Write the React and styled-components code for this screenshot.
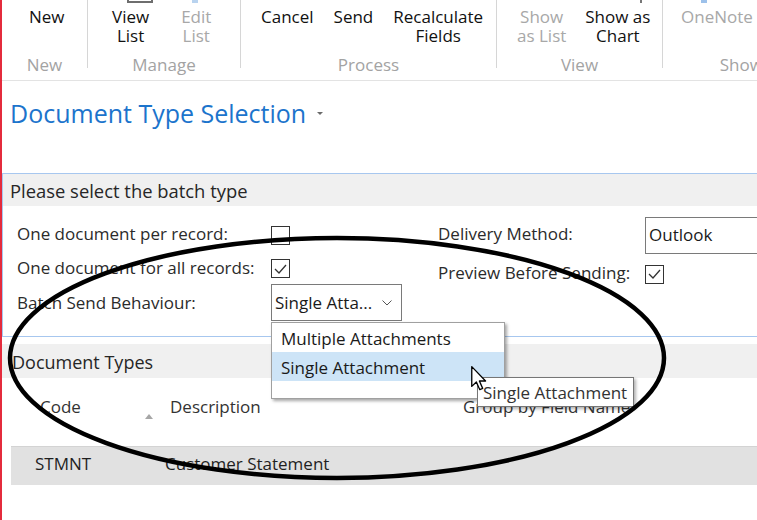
import React from "react";
import styled, { createGlobalStyle } from "styled-components";

const GlobalStyle = createGlobalStyle`
  html, body {
    margin: 0;
    padding: 0;
    background: #fff;
  }
  body {
    font-family: "Open Sans", "Noto Sans", sans-serif;
    color: #2b2b2b;
    width: 757px;
    height: 520px;
    overflow: hidden;
  }
`;

const Page = styled.div`
  position: relative;
  width: 757px;
  height: 520px;
  border-left: 2px solid #e42b3c;
  box-sizing: border-box;
  overflow: hidden;
`;

/* ---------- ribbon ---------- */

const Ribbon = styled.div`
  display: flex;
  align-items: flex-start;
  height: 80px;
  border-bottom: 1px solid #e3e3e3;
  white-space: nowrap;
`;

const Group = styled.div`
  flex: none;
  width: ${(p) => p.$w}px;
  height: 68px;
  box-sizing: border-box;
  border-right: ${(p) => (p.$last ? "none" : "1px solid #d6d6d6")};
  display: flex;
  flex-direction: column;
`;

const Buttons = styled.div`
  flex: none;
  display: flex;
  align-items: flex-start;
  height: 55px;
  padding-left: ${(p) => p.$pad}px;
  gap: ${(p) => p.$gap || 0}px;
`;

const RibbonButton = styled.div`
  display: flex;
  flex-direction: column;
  align-items: center;
  font-size: 17px;
  line-height: 19px;
  text-align: center;
  white-space: pre-line;
  color: ${(p) => (p.$disabled ? "#a8a8a8" : "#111")};
`;

const IconStub = styled.div`
  width: ${(p) => p.$w || 0}px;
  height: 3px;
  margin-bottom: 4px;
  box-sizing: border-box;
  transform: translateX(${(p) => p.$dx || 0}px);
  background: ${(p) => (p.$box ? "transparent" : p.$color || "transparent")};
  border: ${(p) => (p.$box ? "2px solid #6e6e6e" : "none")};
  border-top: none;
`;

const GroupLabel = styled.div`
  flex: none;
  height: 20px;
  line-height: 20px;
  font-size: 17px;
  text-align: center;
  color: #a3a3a3;
`;

/* ---------- title ---------- */

const TitleBar = styled.div`
  display: flex;
  align-items: center;
  gap: 11px;
  padding: 15px 0 43px 8px;
  height: 34px;
`;

const Title = styled.h1`
  margin: 0;
  font-size: 25px;
  font-weight: 400;
  line-height: 34px;
  color: #1c74cc;
`;

const Caret = styled.span`
  width: 0;
  height: 0;
  border-left: 3px solid transparent;
  border-right: 3px solid transparent;
  border-top: 3px solid #6a6a6a;
`;

/* ---------- fast tab ---------- */

const Panel = styled.section`
  border: 1px solid #a7c7ef;
  border-right: none;
`;

const PanelHeader = styled.div`
  height: 32px;
  line-height: 33px;
  padding-left: 7px;
  background: #f0f0f0;
  font-size: 18.4px;
  color: #262626;
`;

const PanelBody = styled.div`
  display: flex;
  padding: 10px 0 15px 14px;
`;

const Column = styled.div`
  flex: none;
  width: ${(p) => p.$w}px;
  display: flex;
  flex-direction: column;
`;

const FieldRow = styled.div`
  display: flex;
  align-items: center;
  height: ${(p) => p.$h}px;
`;

const FieldLabel = styled.div`
  flex: none;
  width: ${(p) => p.$w}px;
  font-size: 17px;
  color: #2b2b2b;
  white-space: nowrap;
  margin-top: ${(p) => p.$dy || 0}px;
`;

const CheckBox = styled.div`
  width: 19px;
  height: 19px;
  box-sizing: border-box;
  margin-top: ${(p) => p.$dy || 0}px;
  border: 1px solid #333;
  display: flex;
  align-items: center;
  justify-content: center;
`;

const TextBox = styled.div`
  width: 140px;
  height: 37px;
  box-sizing: border-box;
  border: 1px solid #7a7a7a;
  padding-left: 3px;
  line-height: 33px;
  font-size: 17px;
  color: #1a1a1a;
`;

const Select = styled.div`
  position: relative;
  width: 131px;
  height: 37px;
  box-sizing: border-box;
  border: 1px solid #7a7a7a;
  display: flex;
  align-items: center;
  justify-content: space-between;
  padding: 0 9px 0 3px;
  font-size: 17px;
  color: #1a1a1a;
  white-space: nowrap;
`;

const Popup = styled.div`
  position: absolute;
  top: 37px;
  left: -1px;
  width: 234px;
  height: 77px;
  box-sizing: border-box;
  background: #fff;
  border: 1px solid #a0a0a0;
  box-shadow: 2px 2px 3px rgba(0, 0, 0, 0.35);
  z-index: 2;
`;

const Option = styled.div`
  height: 29px;
  line-height: 31px;
  padding-left: 9px;
  font-size: 17px;
  color: #1a1a1a;
  background: ${(p) => (p.$active ? "#cde4f7" : "transparent")};
`;

const Tooltip = styled.div`
  position: absolute;
  left: 205px;
  top: 54px;
  height: 30px;
  box-sizing: border-box;
  padding: 0 6px 0 5px;
  line-height: 29px;
  border: 1px solid #767676;
  background: #fff;
  font-size: 17px;
  color: #333;
  white-space: nowrap;
  box-shadow: 2px 2px 3px rgba(0, 0, 0, 0.3);
  z-index: 3;
`;

const Cursor = styled.svg`
  position: absolute;
  left: 199px;
  top: 43px;
  z-index: 4;
`;

/* ---------- document types ---------- */

const SectionHeader = styled.div`
  margin-top: 7px;
  height: 34px;
  line-height: 36px;
  padding-left: 10px;
  background: #f0f0f0;
  font-size: 18px;
  color: #262626;
`;

const GridRow = styled.div`
  display: grid;
  grid-template-columns: 144px 293px 1fr;
  margin-left: 9px;
  font-size: 17px;
  white-space: nowrap;
`;

const HeaderRow = styled(GridRow)`
  height: 68px;
  padding-top: 17px;
  box-sizing: border-box;
  line-height: 24px;
  color: #333;
`;

const HeaderCell = styled.div`
  position: relative;
  padding-left: ${(p) => p.$pad}px;
`;

const SortArrow = styled.span`
  position: absolute;
  right: 2px;
  top: 19px;
  width: 0;
  height: 0;
  border-left: 4px solid transparent;
  border-right: 4px solid transparent;
  border-bottom: 5px solid #a6a6a6;
`;

const DataRow = styled(GridRow)`
  height: 39px;
  box-sizing: border-box;
  line-height: 34px;
  background: #e1e1e1;
  border-top: 1px solid #d3d3d3;
  color: #1f1f1f;
`;

const Cell = styled.div`
  padding-left: ${(p) => p.$pad}px;
`;

const Annotation = styled.svg`
  position: absolute;
  left: -2px;
  top: 0;
  pointer-events: none;
  z-index: 5;
`;

const Check = () => (
  <svg width="15" height="12" viewBox="0 0 15 12">
    <polyline points="2,6 6,10 13,2" fill="none" stroke="#333" strokeWidth="1.3" />
  </svg>
);

const Chevron = () => (
  <svg width="10" height="6" viewBox="0 0 10 6">
    <polyline points="0.5,0.5 5,5 9.5,0.5" fill="none" stroke="#555" strokeWidth="1" />
  </svg>
);

const ribbon = [
  { w: 86, pad: 27, label: "New", buttons: [{ t: ["New"] }] },
  {
    w: 153,
    pad: 24,
    gap: 32,
    label: "Manage",
    buttons: [
      { t: ["View", "List"], stub: { $w: 26, $box: true, $dx: 9 } },
      { t: ["Edit", "List"], off: true, stub: { $w: 6, $color: "#b9d3ef", $dx: -1 } },
    ],
  },
  {
    w: 256,
    pad: 20,
    gap: 20,
    label: "Process",
    buttons: [{ t: ["Cancel"] }, { t: ["Send"] }, { t: ["Recalculate", "Fields"] }],
  },
  {
    w: 166,
    pad: 20,
    gap: 19,
    label: "View",
    buttons: [
      { t: ["Show", "as List"], off: true },
      { t: ["Show as", "Chart"], stub: { $w: 2, $color: "#777", $dx: 23 } },
    ],
  },
  {
    w: 232,
    pad: 18,
    label: "Show Attached",
    last: true,
    buttons: [{ t: ["OneNote"], off: true, stub: { $w: 6, $color: "#9dc1ea", $dx: -13 } }],
  },
];

export default function App() {
  return (
    <>
      <GlobalStyle />
      <Page>
        <Ribbon>
          {ribbon.map((g) => (
            <Group key={g.label} $w={g.w} $last={g.last}>
              <Buttons $pad={g.pad} $gap={g.gap}>
                {g.buttons.map((b) => (
                  <RibbonButton key={b.t.join(" ")} $disabled={b.off}>
                    <IconStub {...(b.stub || {})} />
                    <span>{b.t.join("\n")}</span>
                  </RibbonButton>
                ))}
              </Buttons>
              <GroupLabel>{g.label}</GroupLabel>
            </Group>
          ))}
        </Ribbon>

        <TitleBar>
          <Title>Document Type Selection</Title>
          <Caret />
        </TitleBar>

        <Panel>
          <PanelHeader>Please select the batch type</PanelHeader>
          <PanelBody>
            <Column $w={421}>
              <FieldRow $h={34}>
                <FieldLabel $w={254}>One document per record:</FieldLabel>
                <CheckBox $dy={5} />
              </FieldRow>
              <FieldRow $h={34}>
                <FieldLabel $w={254}>One document for all records:</FieldLabel>
                <CheckBox $dy={3}>
                  <Check />
                </CheckBox>
              </FieldRow>
              <FieldRow $h={37}>
                <FieldLabel $w={254}>Batch Send Behaviour:</FieldLabel>
                <Select>
                  <span>Single Atta...</span>
                  <Chevron />
                  <Popup>
                    <Option>Multiple Attachments</Option>
                    <Option $active>Single Attachment</Option>
                    <Tooltip>Single Attachment</Tooltip>
                    <Cursor width="16" height="25" viewBox="0 0 12 19">
                      <path
                        d="M0.5 0.5 L0.5 15.5 L4 12.2 L6.6 18 L8.8 17 L6.3 11.4 L11 11.4 Z"
                        fill="#fff"
                        stroke="#000"
                        strokeWidth="1"
                        strokeLinejoin="round"
                      />
                    </Cursor>
                  </Popup>
                </Select>
              </FieldRow>
            </Column>
            <Column $w={320}>
              <FieldRow $h={38}>
                <FieldLabel $w={207} $dy={-3}>Delivery Method:</FieldLabel>
                <TextBox>Outlook</TextBox>
              </FieldRow>
              <FieldRow $h={36}>
                <FieldLabel $w={207}>Preview Before Sending:</FieldLabel>
                <CheckBox $dy={4}>
                  <Check />
                </CheckBox>
              </FieldRow>
            </Column>
          </PanelBody>
        </Panel>

        <SectionHeader>Document Types</SectionHeader>
        <HeaderRow>
          <HeaderCell $pad={29}>
            Code
            <SortArrow />
          </HeaderCell>
          <HeaderCell $pad={15}>Description</HeaderCell>
          <HeaderCell $pad={15}>Group by Field Name</HeaderCell>
        </HeaderRow>
        <DataRow>
          <Cell $pad={24}>STMNT</Cell>
          <Cell $pad={10}>Customer Statement</Cell>
          <Cell $pad={10} />
        </DataRow>

        <Annotation width="757" height="520" viewBox="0 0 757 520">
          <ellipse cx="337" cy="358" rx="327" ry="120" fill="none" stroke="#000" strokeWidth="4.5" />
        </Annotation>
      </Page>
    </>
  );
}
